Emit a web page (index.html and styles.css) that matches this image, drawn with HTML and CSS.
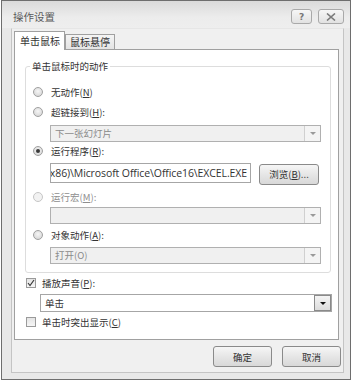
FILE: index.html
```html
<!DOCTYPE html>
<html lang="zh-CN">
<head>
    <meta charset="UTF-8">
    <title>操作设置</title>
    <link rel="stylesheet" href="styles.css">
</head>
<body>
    <div class="dialog">
        <div class="titlebar">
            <span class="title">操作设置</span>
            <span class="capbtn help">?</span>
            <span class="capbtn close">
                <svg width="10" height="8" viewBox="0 0 10 8"><path d="M1 0.5 L9 7.5 M9 0.5 L1 7.5" stroke="#7a7a7a" stroke-width="1.6" fill="none"/></svg>
            </span>
        </div>
        <div class="frame">
            <div class="tabs">
                <div class="tab active">单击鼠标</div>
                <div class="tab">鼠标悬停</div>
            </div>
            <div class="panel">
                <fieldset class="group">
                    <legend>单击鼠标时的动作</legend>
                    <div class="row r1"><span class="radio"></span>无动作(<u>N</u>)</div>
                    <div class="row r2"><span class="radio"></span>超链接到(<u>H</u>):</div>
                    <div class="combo disabled d1"><span class="val">下一张幻灯片</span><span class="arrow"></span></div>
                    <div class="row r3"><span class="radio on"></span>运行程序(<u>R</u>):</div>
                    <div class="progrow">
                        <div class="textfield"><span>C:\Program Files (x86)\Microsoft Office\Office16\EXCEL.EXE</span></div>
                        <div class="btn browse">浏览(<u>B</u>)...</div>
                    </div>
                    <div class="row r4 grey"><span class="radio off"></span>运行宏(<u>M</u>):</div>
                    <div class="combo disabled d2"><span class="val"></span><span class="arrow"></span></div>
                    <div class="row r5"><span class="radio"></span>对象动作(<u>A</u>):</div>
                    <div class="combo disabled d3"><span class="val">打开(O)</span><span class="arrow"></span></div>
                </fieldset>
                <div class="row c1"><span class="check on">
                    <svg width="8" height="8" viewBox="0 0 8 8"><path d="M1 4 L3 6.5 L7 1" stroke="#3a3a3a" stroke-width="1.2" fill="none"/></svg>
                </span>播放声音(<u>P</u>):</div>
                <div class="combo sound"><span class="val">单击</span><span class="arrow dark"></span></div>
                <div class="row c2"><span class="check"></span>单击时突出显示(<u>C</u>)</div>
            </div>
            <div class="buttons">
                <div class="btn">确定</div>
                <div class="btn">取消</div>
            </div>
        </div>
    </div>
</body>
</html>
```

FILE: styles.css
```css
body {
    margin: 0;
    background: #ffffff;
    font-family: "Noto Sans CJK SC", "Noto Sans", sans-serif;
    font-size: 9.5px;
    color: #333333;
}
.dialog {
    margin-left: 1px;
    width: 350px;
    height: 380px;
    box-sizing: border-box;
    border: 1px solid #6e6e6e;
    background: #e8e8e8;
    display: flex;
    flex-direction: column;
}
.titlebar {
    height: 28px;
    box-sizing: border-box;
    padding: 4px 6px 0 11px;
    display: flex;
    align-items: center;
    background: linear-gradient(#dadada, #ececec 60%, #eeeeee);
}
.title {
    flex: 1;
    color: #5a5a5a;
    font-size: 10.5px;
}
.capbtn {
    height: 15px;
    box-sizing: border-box;
    border: 1px solid #a9a9a9;
    border-radius: 3px;
    background: linear-gradient(#f6f6f6, #e2e2e2);
    display: flex;
    align-items: center;
    justify-content: center;
    color: #777777;
    font-family: "DejaVu Sans", sans-serif;
    font-size: 9px;
    font-weight: bold;
}
.help {
    width: 21px;
    margin-right: 6px;
}
.close {
    width: 26px;
}
.frame {
    flex: 1;
    margin: 0 6px 6px 9px;
    border: 1px solid #c4c4c4;
    border-top-color: #e6e6e6;
    background: #f0f0f0;
    padding: 2px 4px 5px 2px;
    display: flex;
    flex-direction: column;
}
.tabs {
    display: flex;
    align-items: flex-end;
    height: 18px;
}
.tab {
    height: 15px;
    box-sizing: border-box;
    border: 1px solid #a0a0a0;
    border-bottom: none;
    padding: 0 4px;
    background: linear-gradient(#f4f4f4, #e4e4e4);
    line-height: 14px;
    font-size: 10px;
    white-space: nowrap;
}
.tab.active {
    position: relative;
    z-index: 1;
    height: 19px;
    margin-bottom: -1px;
    width: 51px;
    padding: 0 0 0 5px;
    background: #ffffff;
    line-height: 18px;
}
.panel {
    border: 1px solid #a0a0a0;
    background: #ffffff;
    padding: 8px 7px 8px 10px;
}
.group {
    margin: 0;
    border: 1px solid #dddddd;
    border-radius: 3px;
    padding: 0 9px 8px 8px;
}
.group legend {
    margin-left: -4px;
    padding: 0 2px;
    line-height: 16px;
    height: 16px;
}
.row {
    display: flex;
    align-items: center;
    height: 18px;
}
.r1 { margin-top: 9px; }
.r2 { margin-top: 2px; }
.r4 { margin-top: 4px; }
.r5 { margin-top: 2px; }
.grey { color: #8e8e8e; }
.radio {
    width: 10px;
    height: 10px;
    box-sizing: border-box;
    border: 1px solid #a0a0a0;
    border-radius: 50%;
    background: radial-gradient(circle at 50% 40%, #f6f6f6, #d0d0d0);
    margin: 0 8px 0 -1px;
    display: flex;
    align-items: center;
    justify-content: center;
}
.radio.on::after {
    content: "";
    width: 4px;
    height: 4px;
    border-radius: 50%;
    background: #3a3a3a;
}
.radio.off {
    border-color: #c6c6c6;
    background: #f2f2f2;
}
.combo {
    height: 17px;
    box-sizing: border-box;
    border: 1px solid #b0b0b0;
    margin-left: 16px;
    display: flex;
    align-items: stretch;
    background: #f0f0f0;
}
.combo .val {
    flex: 1;
    padding-left: 4px;
    line-height: 15px;
    color: #8a8a8a;
}
.combo .arrow {
    width: 15px;
    border-left: 1px solid #d0d0d0;
    background: #f4f4f4;
    display: flex;
    align-items: center;
    justify-content: center;
}
.combo .arrow::after {
    content: "";
    border-left: 3px solid transparent;
    border-right: 3px solid transparent;
    border-top: 3px solid #9a9a9a;
}
.d1 { margin-top: 4px; }
.d2 { margin-top: 1px; }
.d3 { margin-top: 3px; }
.progrow {
    display: flex;
    align-items: center;
    margin: 2px 0 0 16px;
    height: 22px;
}
.textfield {
    width: 201px;
    height: 20px;
    box-sizing: border-box;
    border: 1px solid #a6a6a6;
    background: #ffffff;
    display: flex;
    justify-content: flex-end;
    align-items: center;
    overflow: hidden;
    white-space: nowrap;
    padding-right: 3px;
    font-family: "Open Sans", "Noto Sans", sans-serif;
    font-size: 10.5px;
    letter-spacing: -0.1px;
}
.btn {
    height: 21px;
    box-sizing: border-box;
    border: 1px solid #8a8a8a;
    border-radius: 3px;
    background: linear-gradient(#f6f6f6, #e6e6e6 50%, #d8d8d8);
    display: flex;
    align-items: center;
    justify-content: center;
}
.browse {
    width: 60px;
    margin-left: 8px;
    margin-top: 2px;
}
.check {
    width: 10px;
    height: 10px;
    box-sizing: border-box;
    border: 1px solid #9a9a9a;
    background: linear-gradient(#e4e4e4, #f6f6f6);
    margin: 0 6px 0 1px;
    display: flex;
    align-items: center;
    justify-content: center;
}
.c1 { margin-top: 1px; }
.c2 { margin-top: 1px; }
.sound {
    margin: 2px -1px 0 15px;
    height: 18px;
    background: #ffffff;
    border-color: #a6a6a6;
}
.sound .val {
    color: #333333;
    line-height: 16px;
}
.combo .arrow.dark {
    border: 1px solid #8a8a8a;
    background: linear-gradient(#f4f4f4, #dcdcdc);
}
.combo .arrow.dark::after {
    border-top-color: #111111;
    border-left-width: 3.5px;
    border-right-width: 3.5px;
}
.buttons {
    display: flex;
    justify-content: flex-end;
    gap: 10px;
    margin-top: 6px;
    margin-right: -2px;
}
.buttons .btn {
    width: 59px;
}
```
